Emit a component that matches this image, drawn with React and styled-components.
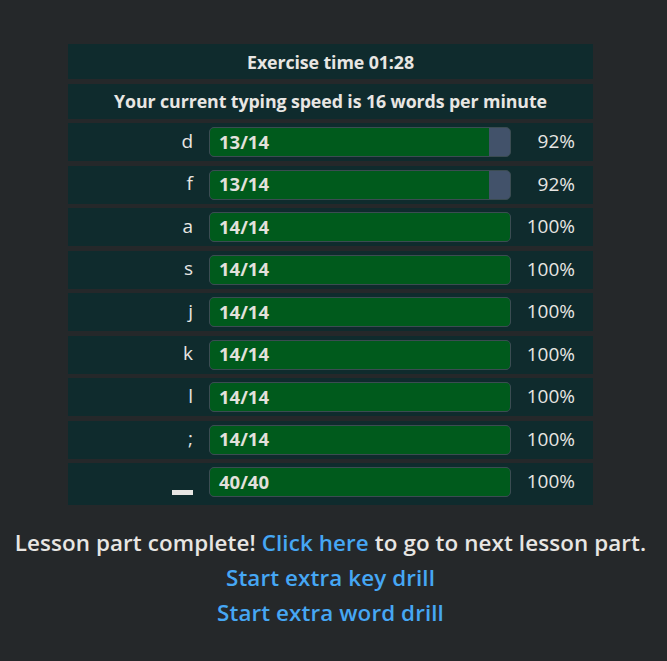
import styled, { createGlobalStyle } from "styled-components";

const GlobalStyle = createGlobalStyle`
  html, body {
    margin: 0;
    background: #25282a;
    color: #e8e6e3;
    font-family: "Open Sans", "Noto Sans", sans-serif;
  }
`;

const stats = [
  { key: "d", done: 13, total: 14 },
  { key: "f", done: 13, total: 14 },
  { key: "a", done: 14, total: 14 },
  { key: "s", done: 14, total: 14 },
  { key: "j", done: 14, total: 14 },
  { key: "k", done: 14, total: 14 },
  { key: "l", done: 14, total: 14 },
  { key: ";", done: 14, total: 14 },
  { key: "space", done: 40, total: 40 },
];

const App = () => {
  return (
    <Page>
      <GlobalStyle />
      <Board>
        <HeadRow>Exercise time 01:28</HeadRow>
        <HeadRow>Your current typing speed is 16 words per minute</HeadRow>
        {stats.map((s) => {
          const pct = (s.done / s.total) * 100;
          const isSpace = s.key === "space";
          return (
            <KeyRow key={s.key} $tall={isSpace}>
              <KeyCell>{isSpace ? <SpaceMark /> : s.key}</KeyCell>
              <BarCell>
                <Bar>
                  <Fill style={{ width: `${pct}%` }} />
                  <BarLabel>
                    {s.done}/{s.total}
                  </BarLabel>
                </Bar>
              </BarCell>
              <PctCell>{Math.floor(pct)}%</PctCell>
            </KeyRow>
          );
        })}
      </Board>
      <Footer>
        <Line>
          Lesson part complete! <Link href="#">Click here</Link> to go to next
          lesson part.
        </Line>
        <Line>
          <Link href="#">Start extra key drill</Link>
        </Line>
        <Line>
          <Link href="#">Start extra word drill</Link>
        </Line>
      </Footer>
    </Page>
  );
};
export default App;

const Page = styled.div`
  width: 661px;
  padding-top: 44px;
  display: flex;
  flex-direction: column;
  align-items: center;
`;
const Board = styled.div`
  width: 525px;
  display: flex;
  flex-direction: column;
  gap: 4.5px;
`;
const HeadRow = styled.div`
  height: 35px;
  background: #0f2b2d;
  display: flex;
  align-items: center;
  justify-content: center;
  font-weight: 700;
  font-size: 17.8px;
  letter-spacing: -0.1px;
`;
const KeyRow = styled.div`
  height: ${(p) => (p.$tall ? "42px" : "38px")};
  background: #0f2b2d;
  display: grid;
  grid-template-columns: 137px 310px 1fr;
  align-items: start;
`;
const KeyCell = styled.div`
  height: 35px;
  display: flex;
  align-items: center;
  justify-content: flex-end;
  padding-right: 12px;
  font-size: 19px;
`;
const SpaceMark = styled.span`
  display: block;
  width: 21px;
  height: 5px;
  margin-top: 23px;
  background: #e8e6e3;
`;
const BarCell = styled.div`
  padding: 4px;
`;
const Bar = styled.div`
  position: relative;
  height: 30px;
  box-sizing: border-box;
  border: 1px solid #3b4c52;
  border-radius: 5px;
  background: #42526a;
  overflow: hidden;
  display: flex;
  align-items: center;
`;
const Fill = styled.div`
  position: absolute;
  left: 0;
  top: 0;
  bottom: 0;
  background: #005a1c;
`;
const BarLabel = styled.span`
  position: relative;
  padding-left: 9px;
  padding-bottom: 2px;
  font-weight: 700;
  font-size: 18.5px;
  color: #e3e1dc;
`;
const PctCell = styled.div`
  height: 36px;
  display: flex;
  align-items: center;
  justify-content: flex-end;
  padding-right: 18px;
  font-size: 19px;
`;
const Footer = styled.div`
  margin-top: 20px;
  display: flex;
  flex-direction: column;
  align-items: center;
  font-size: 22.4px;
  font-weight: 600;
  line-height: 35px;
  letter-spacing: 0.1px;
`;
const Line = styled.div`
  white-space: nowrap;
`;
const Link = styled.a`
  color: #46a7f4;
  text-decoration: none;
`;
